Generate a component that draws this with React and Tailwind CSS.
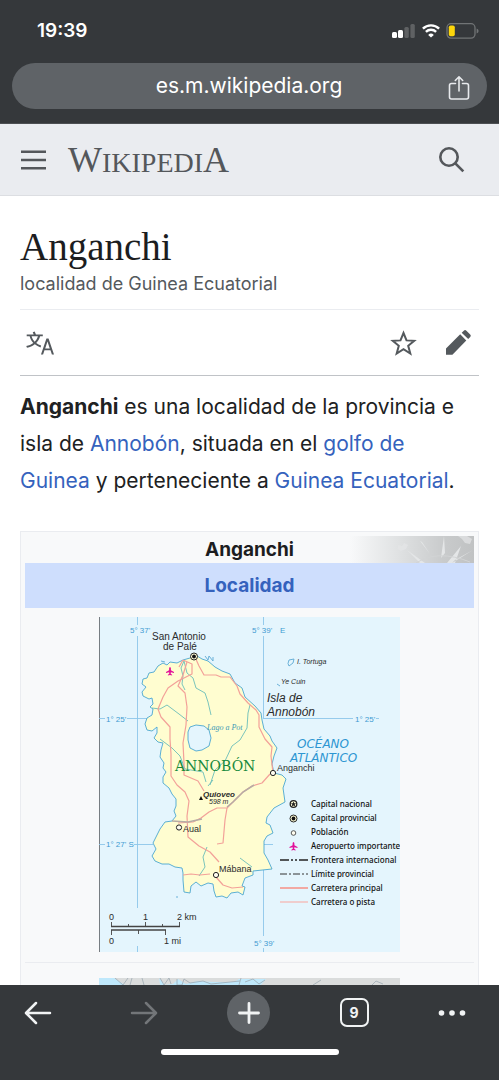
import React from "react";

function StatusBar() {
  return (
    <div className="flex h-[62px] items-center justify-between pr-5 pl-[37px] text-white">
      <span className="font-['Inter',sans-serif] text-[19px] font-semibold">19:39</span>
      <div className="flex items-center gap-[6px]">
        <svg width="24" height="14" viewBox="0 0 24 14" aria-hidden="true">
          <rect x="0" y="8" width="5" height="6" rx="1.5" fill="#fff" />
          <rect x="6" y="6" width="5" height="8" rx="1.5" fill="#fff" />
          <rect x="12.4" y="3" width="4.4" height="11" rx="1.5" fill="#5f6163" />
          <rect x="18.4" y="0" width="4.4" height="14" rx="1.5" fill="#5f6163" />
        </svg>
        <svg width="18" height="14" viewBox="0 0 18 14" aria-hidden="true" fill="none" stroke="#fff" strokeWidth="2.4">
          <path d="M.9 4.7a11.6 11.6 0 0 1 16.2 0" />
          <path d="M3.9 7.9a7.3 7.3 0 0 1 10.2 0" />
          <path d="M9 13.6 6.2 10.9a4 4 0 0 1 5.6 0Z" fill="#fff" stroke="none" />
        </svg>
        <svg width="33" height="16" viewBox="0 0 33 16" aria-hidden="true">
          <rect x="1" y=".7" width="28" height="14.4" rx="4" fill="none" stroke="#717476" strokeWidth="1.3" />
          <path d="M30.6 5.4q2 .8 2 2.5t-2 2.5z" fill="#717476" />
          <rect x="2.8" y="2.5" width="6" height="10.8" rx="1.8" fill="#fdd60b" />
        </svg>
      </div>
    </div>
  );
}

function AddressBar() {
  return (
    <div className="px-3 pb-[14px] pt-[1px]">
      <div className="flex h-[46px] items-center rounded-full bg-[#5f6367] pr-[17px] pl-[38px] text-white">
        <input
          aria-label="Dirección"
          defaultValue="es.m.wikipedia.org"
          className="min-w-0 flex-1 bg-transparent text-center font-['Inter',sans-serif] text-[21px] outline-none"
        />
        <button aria-label="Compartir" className="flex h-8 w-[22px] items-center justify-center pt-1">
          <svg width="22" height="26" viewBox="0 0 22 26" fill="none" stroke="#e8eaed" strokeWidth="1.6" strokeLinecap="round" strokeLinejoin="round">
            <path d="M7.5 8.5H3.5a2 2 0 0 0-2 2V22a2 2 0 0 0 2 2h15a2 2 0 0 0 2-2V10.5a2 2 0 0 0-2-2h-4" />
            <path d="M11 16V2M7.3 5.500 11 1.800l3.700 3.700" />
          </svg>
        </button>
      </div>
    </div>
  );
}

function SiteHeader() {
  return (
    <header className="flex h-[72px] shrink-0 items-center border-b border-[#dcdee2] bg-[#eaecf0] pr-[34px] pl-5">
      <button aria-label="Menú" className="mr-[21px]">
        <svg width="27" height="20" viewBox="0 0 27 20" stroke="#54575b" strokeWidth="2.5">
          <path d="M1 1.7h25M1 10h25M1 18.3h25" />
        </svg>
      </button>
      <a href="#inicio" className="flex items-baseline pt-1 font-['Liberation_Serif',serif] leading-9 text-[#54575b]">
        <span className="text-[36px]">W</span>
        <span className="text-[28px]">IKIPEDI</span>
        <span className="text-[36px]">A</span>
      </a>
      <button aria-label="Buscar" className="ml-auto">
        <svg width="27" height="27" viewBox="0 0 27 27" fill="none" stroke="#54575b" strokeWidth="2.6">
          <circle cx="11" cy="11" r="8.7" />
          <path d="m17.300 17.300 8 8" />
        </svg>
      </button>
    </header>
  );
}

function PageActions() {
  return (
    <nav aria-label="Acciones" className="flex h-[66px] items-center border-b border-[#c0c3c7] pr-[7px] pl-[6px]">
      <button aria-label="Idiomas" className="mr-auto">
        <svg width="28" height="24" viewBox="0 0 20 16.5" fill="#54595d">
          <path d="M20 16.500h-1.500l-1-3h-4.300l-1 3h-1.500L14.600 5h1.500zM17 12.100l-1.650-4.900-1.650 4.900z" />
          <path d="M10.400 11.400c-1.500-.5-2.900-1.200-4.100-2.200-1.600 1.300-3.500 2.100-5.600 2.500l-.5-1.300c1.900-.3 3.600-1 5-2.100C4 7 3.100 5.400 2.600 3.500H.5V2.200h5L4.800.5 6.200 0l.9 2.200H12v1.300h-1.900C9.500 5.400 8.600 7 7.300 8.300c1 .8 2.200 1.400 3.500 1.800zM4 3.500c.4 1.500 1.200 2.800 2.200 3.800 1.100-1 1.900-2.300 2.300-3.800z" />
        </svg>
      </button>
      <button aria-label="Vigilar" className="mr-[28px]">
        <svg width="27" height="26" viewBox="0 0 27 26" fill="none" stroke="#54595d" strokeWidth="2">
          <path d="m13.500 3 3 7.400 7.700.4-6 5 2.100 7.700-6.800-4.400-6.800 4.400 2.100-7.700-6-5 7.700-.4z" />
        </svg>
      </button>
      <button aria-label="Editar">
        <svg width="27" height="27" viewBox="0 0 27 27" fill="#54595d">
          <path d="M1 19.500 15.200 5.300l6.100 6.100L7.400 25.700H1zM16.700 3.800l2.100-2.100q1.300-1.300 2.600 0l3.800 3.800q1.300 1.300 0 2.600l-2 2z" />
        </svg>
      </button>
    </nav>
  );
}

function Plane({ x, y }) {
  return (
    <path
      transform={`translate(${x} ${y})`}
      fill="#e2109a"
      d="M0-4q.8 0 .9 1.600V-.8L4 .9V1.900L.9 1.200.7 2.800l1.400 1V4.500L0 4.100l-2.100.4v-.7l1.400-1-.2-1.600L-4 1.900V.9L-.9-.8v-1.600Q-.8-4 0-4Z"
    />
  );
}

function Capital({ x, y }) {
  return (
    <g>
      <circle cx={x} cy={y} r="3.5" fill="#fffdd8" stroke="#111" strokeWidth=".9" />
      <circle cx={x} cy={y} r="1.9" fill="#111" />
    </g>
  );
}

const LEGEND = [
  ["Capital nacional", 807],
  ["Capital provincial", 821],
  ["Población", 835],
  ["Aeropuerto importante", 849],
  ["Frontera internacional", 863],
  ["Límite provincial", 877],
  ["Carretera principal", 891],
  ["Carretera o pista", 905],
];

function IslandMap() {
  return (
    <svg role="img" aria-label="Mapa de Annobón" viewBox="99 617 301 335" className="mx-auto block w-[301px]">
      <rect x="99" y="617" width="301" height="335" fill="#e4f5fd" />
      <path d="M99.500 617v335" stroke="#777d82" />
      <g stroke="#8cc6ea" strokeWidth=".9">
        <path d="M137.500 617v8M137.500 636v272M137.500 946v6M263.500 617v8M263.500 636v82M263.500 850v86M263.500 948v4" />
        <path d="M99 718.500h6M127 718.500h26M263 718.500h90M376 718.500h3M99 844.500h6M134 844.500h19M263 844.500h10" />
      </g>
      <path
        d="M194 654 L190 658 183 660 177 663 170 662 167 665 163 663 158 666 154 672 149 673 147 678 143 679 142 684 146 687 142 692 143 696 149 699 152 698 153 704 150 707 153 709 152 715 147 718 145 724 147 730 152 731 157 727 157 733 154 738 158 742 163 743 161 750 160 757 164 763 163 768 166 772 163 777 163 783 169 788 172 794 176 799 176 806 174 811 176 816 172 821 165 822 160 829 157 835 153 843 156 849 152 856 155 861 162 864 169 864 175 867 182 868 183 873 183 880 184 892 190 893 191 886 196 882 201 886 208 883 213 884 214 891 216 897 222 896 227 898 231 893 238 892 243 895 245 887 242 886 245 878 253 875 253 871 272 869 268 860 264 853 264 841 267 836 273 833 270 825 266 823 267 817 274 808 285 802 283 788 286 779 282 775 274 773 272 764 274 756 277 748 272 741 270 736 264 729 262 720 261 713 255 706 245 697 242 688 235 683 230 674 222 671 215 667 208 661 202 659Z"
        fill="#fffdd0"
        stroke="#4ba7d0"
        strokeWidth=".9"
        strokeLinejoin="round"
      />
      <g fill="none" stroke="#6bbdb9" strokeWidth=".9" strokeLinejoin="round">
        <path d="M184 661l-3 7 2 8-1 8 3 6M184 661l3 12 6 5 3 10 9 5 3 9 3 13M152 708l8 1 7-4 12 9 9 7" />
        <path d="M250 705l-2 8-1 15-7 12-8 6-7 15-10 9-5 15M160 739l12 9 8 8 5 13 18 3 3 10M207 847l-4 10 2 10-6 9M240 858l12 9M213 780l-5 6" />
      </g>
      <path d="M190 727 196 725 204 726 209 730 211 738 209 746 202 750 196 751 190 748 188 740 188 732Z" fill="#e4f5fd" stroke="#4ba7d0" strokeWidth=".9" strokeLinejoin="round" />
      <g fill="none" stroke="#f3a199" strokeWidth="1.2" strokeLinejoin="round">
        <path d="M195 657l4 9 5 9 12 0 5 2 9 0 7 9 3 8 8 9 8 7 3 5 0 12 6 12 7 8-1 9 2 17M270 774l-8 9-10 3-9 6-10 10-6 6-10 0-8 4-8 6-8 4-15 1" />
        <path d="M183 660l-4 7M183 660l9 4 0 10-14 7-10 7-5 9-5 12 3 8 9 10 0 12 1 15 0 22 6 9 8 7 4 9-2 15 1 21 11 9 11 6 9 10" />
        <path d="M187 662l-4 13-5 11 7 7 2 14-1 18-3 18 1 20 0 12 14 6 6 10M227 808l-2 12-2 23-6 1M183 875l8-1 9 1 10-1M216 877l7 8 9 3 11-1" />
      </g>
      <path d="M254 785l-11 7-10 10-6 5M202 819l-14 3-16-1" stroke="#b6aca5" strokeWidth="1.5" fill="none" />
      <g fill="none" stroke="#5ca9d4" strokeWidth=".9">
        <path d="m205 656 3 4 1-4 4 5 0-4M161 661l4 1M289 660l5-1-1 4-4 3q-2-2 0-6ZM277 684l3 2M177 896v2" />
      </g>
      <Capital x={194} y={656.5} />
      <Plane x={170} y={671} />
      <g fill="#fffdf0" stroke="#222" strokeWidth="1">
        <circle cx="273" cy="773" r="2.6" />
        <circle cx="179" cy="827.5" r="2.6" />
        <circle cx="216" cy="875" r="2.6" />
      </g>
      <path d="m201 796 2 4h-4z" fill="#111" />

      <g className="font-['Liberation_Sans',sans-serif]" fontSize="10" fill="#2b2b2b">
        <text x="152" y="640">San Antonio</text>
        <text x="163" y="650">de Palé</text>
        <text x="277" y="771" fontSize="9">Anganchi</text>
        <text x="183" y="832" fontSize="9">Aual</text>
        <text x="219" y="872" fontSize="9">Mábana</text>
        <g fontStyle="italic">
          <text x="267" y="702" fontSize="12">Isla de</text>
          <text x="267" y="716" fontSize="12">Annobón</text>
          <text x="297" y="664" fontSize="7">I. Tortuga</text>
          <text x="281" y="684" fontSize="7">Ye Cuin</text>
          <text x="203" y="797" fontSize="8" fontWeight="bold">Quioveo</text>
          <text x="209" y="804" fontSize="7">598 m</text>
        </g>
        <g fontSize="8" fill="#3f9bd2">
          <text x="130" y="633">5° 37'</text>
          <text x="252" y="633">5° 39'</text>
          <text x="280" y="633">E</text>
          <text x="106" y="722">1° 25'</text>
          <text x="355" y="722">1° 25'</text>
          <text x="106" y="847">1° 27' S</text>
          <text x="254" y="946">5° 39'</text>
        </g>
        <g fontSize="9">
          <text x="109" y="920">0</text>
          <text x="143" y="920">1</text>
          <text x="177" y="920">2 km</text>
          <text x="109" y="944">0</text>
          <text x="164" y="944">1 mi</text>
        </g>
      </g>
      <g className="font-['DejaVu_Sans',sans-serif]" fontStyle="italic" fontSize="12" fill="#2d96d2">
        <text x="297" y="748">OCÉANO</text>
        <text x="290" y="762">ATLÁNTICO</text>
      </g>
      <text x="207" y="730" fontSize="8" fontStyle="italic" fill="#3f9bb5" className="font-['Liberation_Serif',serif]">Lago a Pot</text>
      <text x="175" y="771" fontSize="14" fill="#178a3d" className="font-['DejaVu_Serif',serif]">ANNOBÓN</text>

      <path d="M111.500 922v4.500M179.500 926.500V922M145.500 922v4M128.500 924v2M162.500 924v2M111.500 935v-5M165.500 930v5M138.500 930v4" fill="none" stroke="#444" strokeWidth=".9" />
      <path d="M111 926.500h69M111 930h55" stroke="#444" strokeWidth="1.3" />

      <circle cx="293.500" cy="804" r="3.3" fill="#fffdd8" stroke="#222" strokeWidth="1.3" />
      <path d="m293.500 801.500.8 1.800 1.900.1-1.500 1.200.5 1.900-1.700-1-1.700 1 .5-1.900-1.500-1.200 1.900-.1z" fill="#222" />
      <Capital x={293.5} y={818.5} />
      <circle cx="293.500" cy="833" r="2.3" fill="#fffdf0" stroke="#333" strokeWidth=".8" />
      <Plane x={293.5} y={846} />
      <path d="M280 860h28" stroke="#222" strokeWidth="1.5" strokeDasharray="9 2 2 2 2 2" />
      <path d="M280 874h28" stroke="#333" strokeWidth="1" strokeDasharray="7 2 2 2" />
      <path d="M280 888h28" stroke="#f3a199" strokeWidth="1.8" />
      <path d="M280 902h28" stroke="#f5b6b4" strokeWidth="1.3" />
      <g className="font-['Noto_Sans',sans-serif]" fontSize="8" fontWeight="500" fill="#111">
        {LEGEND.map(([label, y]) => (
          <text key={label} x="311" y={y}>{label}</text>
        ))}
      </g>
    </svg>
  );
}

function Infobox() {
  return (
    <section aria-label="Ficha" className="mx-5 border border-[#eaecf0] bg-[#f8f9fa] p-1 text-center font-['Inter',sans-serif]">
      <div className="relative h-[27px]">
        <svg className="absolute top-0 right-0" width="124" height="27" viewBox="0 0 124 27" aria-hidden="true">
          <defs>
            <linearGradient id="fade">
              <stop offset="0" stopColor="#f8f9fa" />
              <stop offset=".4" stopColor="#dfe1e2" />
              <stop offset=".75" stopColor="#c9cbcc" />
              <stop offset="1" stopColor="#c0c2c3" />
            </linearGradient>
          </defs>
          <rect width="124" height="27" fill="url(#fade)" />
          <g fill="#e4e6e7">
            <path d="m57 14 18 13h-5zM70 5l10 13-8-12zM94 0l1 17-4 5zM97 27l14-17-6 17zM123 14l-18 10-3 3z" />
            <path d="m48 9 4 1 2-3 4 2-2 4-5 2-3-2zM108 0h9l5 3-2 5-5-1-3-4z" opacity=".7" />
          </g>
          <path d="M66 27q22-14 54-1" fill="none" stroke="#d2d4d5" />
        </svg>
        <h2 className="relative text-[19px] leading-[28px] font-bold text-[#1c1d1f]">Anganchi</h2>
      </div>
      <div className="bg-[#cedefd] text-[19px] leading-[45px] font-bold">
        <a href="#localidad" className="text-[#3562bd]">Localidad</a>
      </div>
      <div className="border-b border-[#eaecf0] pt-[9px] pb-[10px]">
        <IslandMap />
      </div>
      <div className="pt-[15px]">
        <svg viewBox="0 0 301 60" className="mx-auto block w-[301px]" role="img" aria-label="Mapa de localización">
          <rect width="301" height="60" fill="#dadcdc" />
          <path d="M0 0h15l11 7-2 53H0zM60 0l6 7 8-1 5-5 8 5 12-3 16 1h20l5-3h27l-6 7-4 5v47H70z" fill="#bfe8fb" />
          <path d="m16 0 8 7 5-7M33 0l-2 7M43 0l2 7M61 0l4 7 5-7 2 6M78 1v6h5l2-6 6 4 13-2 8 3 29-3M142 0l-2 7M146 4l8-3 6 5 6-4M214 7l8-5M273 7l4-4 7 3" fill="none" stroke="#9eabb4" strokeWidth=".8" />
        </svg>
      </div>
    </section>
  );
}

function BottomBar() {
  return (
    <footer className="h-[95px] shrink-0 bg-[#35383b]">
      <nav aria-label="Navegador" className="flex items-center justify-between px-[24px] pt-[6px]">
        <button aria-label="Atrás" className="flex h-[43px] items-center">
          <svg width="28" height="24" viewBox="0 0 28 24" fill="none" stroke="#f1f3f4" strokeWidth="2.5" strokeLinecap="round" strokeLinejoin="round">
            <path d="M26 12H2.500M12 2 2 12l10 10" />
          </svg>
        </button>
        <button aria-label="Adelante" className="ml-[50px] flex h-[43px] items-center">
          <svg width="28" height="24" viewBox="0 0 28 24" fill="none" stroke="#737679" strokeWidth="2.5" strokeLinecap="round" strokeLinejoin="round">
            <path d="M2 12h23.500M16 2l10 10-10 10" />
          </svg>
        </button>
        <button aria-label="Pestaña nueva" className="mx-[42px] flex size-[43px] items-center justify-center rounded-full bg-[#5f6367]">
          <svg width="24" height="24" viewBox="0 0 24 24" stroke="#f1f3f4" strokeWidth="2.8" strokeLinecap="round">
            <path d="M12 2.500v19M2.500 12h19" />
          </svg>
        </button>
        <button aria-label="Pestañas" className="mr-[42px] flex size-[29px] items-center justify-center rounded-[7px] border-2 border-[#f1f3f4] font-['Inter',sans-serif] text-[14px] font-bold text-[#f1f3f4]">
          9
        </button>
        <button aria-label="Más opciones" className="mr-[9px] flex h-[43px] items-center">
          <svg width="28" height="6" viewBox="0 0 28 6" fill="#f1f3f4">
            <circle cx="3.5" cy="3" r="2.8" />
            <circle cx="14" cy="3" r="2.8" />
            <circle cx="24.5" cy="3" r="2.8" />
          </svg>
        </button>
      </nav>
      <div className="mx-auto mt-[15px] h-[6px] w-[178px] rounded-full bg-white" />
    </footer>
  );
}

export default function App() {
  const link = "text-[#3562bd]";
  return (
    <div className="flex h-dvh flex-col overflow-hidden bg-white">
      <div className="shrink-0 border-b border-[#4c4f52] bg-[#35383b]">
        <StatusBar />
        <AddressBar />
      </div>
      <main className="min-h-0 flex-1 overflow-hidden">
        <SiteHeader />
        <article>
          <div className="px-5 pt-[28px]">
            <h1 className="font-['Liberation_Serif',serif] text-[39px] leading-[46px] text-[#1c1d1f]">Anganchi</h1>
            <p className="pt-[1px] pb-[13px] font-['Inter',sans-serif] text-[18px] leading-[25px] text-[#54595d]">
              localidad de Guinea Ecuatorial
            </p>
            <div className="border-t border-[#eaecf0]">
              <PageActions />
            </div>
            <p className="pt-3 pb-8 font-['Inter',sans-serif] text-[21px] leading-[37px] text-[#202122]">
              <b>Anganchi</b> es una localidad de la provincia e isla de{" "}
              <a href="#annobon" className={link}>Annobón</a>, situada en el{" "}
              <a href="#golfo" className={link}>golfo de Guinea</a> y perteneciente a{" "}
              <a href="#guinea" className={link}>Guinea Ecuatorial</a>.
            </p>
          </div>
          <Infobox />
        </article>
      </main>
      <BottomBar />
    </div>
  );
}
